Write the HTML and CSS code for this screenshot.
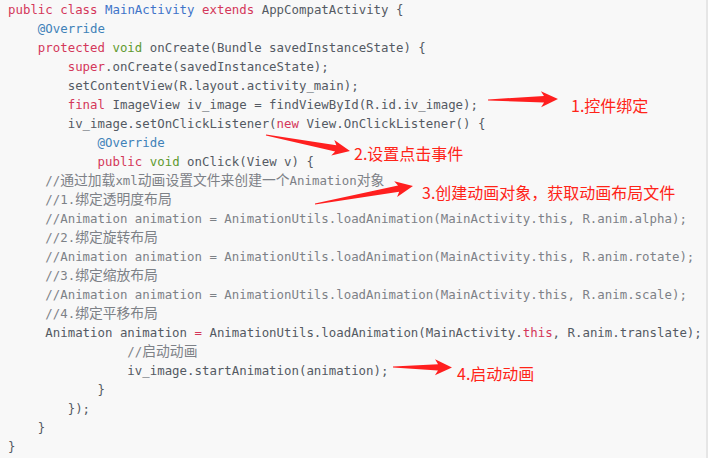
FILE: index.html
```html
<!DOCTYPE html>
<html lang="zh-CN">
<head>
<meta charset="utf-8">
<title>MainActivity</title>
<link rel="stylesheet" href="styles.css">
</head>
<body>
<div class="code-box">
<pre class="code"><div class="ln"><span class="k">public</span> <span class="k">class</span> <span class="t">MainActivity</span> <span class="k">extends</span> AppCompatActivity {</div><div class="ln">    <span class="a">@Override</span></div><div class="ln">    <span class="k">protected</span> <span class="g">void</span> onCreate(Bundle savedInstanceState) {</div><div class="ln">        <span class="k">super</span>.onCreate(savedInstanceState);</div><div class="ln">        setContentView(R.layout.activity_main);</div><div class="ln">        <span class="k">final</span> ImageView iv_image = findViewById(R.id.iv_image);</div><div class="ln">        iv_image.setOnClickListener(<span class="k">new</span> View.OnClickListener() {</div><div class="ln">            <span class="a">@Override</span></div><div class="ln">            <span class="k">public</span> <span class="g">void</span> onClick(View v) {</div><div class="ln c">     //<span class="cn">通过加载</span>xml<span class="cn">动画设置文件来创建一个</span>Animation<span class="cn">对象</span></div><div class="ln c">     //1.<span class="cn">绑定透明度布局</span></div><div class="ln c">     //Animation animation = AnimationUtils.loadAnimation(MainActivity.this, R.anim.alpha);</div><div class="ln c">     //2.<span class="cn">绑定旋转布局</span></div><div class="ln c">     //Animation animation = AnimationUtils.loadAnimation(MainActivity.this, R.anim.rotate);</div><div class="ln c">     //3.<span class="cn">绑定缩放布局</span></div><div class="ln c">     //Animation animation = AnimationUtils.loadAnimation(MainActivity.this, R.anim.scale);</div><div class="ln c">     //4.<span class="cn">绑定平移布局</span></div><div class="ln">     Animation animation <span class="k">=</span> AnimationUtils.loadAnimation(MainActivity.<span class="k">this</span>, R.anim.translate);</div><div class="ln c">                //<span class="cn">启动动画</span></div><div class="ln">                iv_image.startAnimation(animation);</div><div class="ln">            }</div><div class="ln">        });</div><div class="ln">    }</div><div class="ln">}</div></pre>
<svg class="arrows" width="706" height="458" viewBox="0 0 706 458">
  <g fill="#ff1f1f">
    <g transform="translate(488 100) rotate(-0.8)">
      <polygon points="0,-0.6 56,-3.2 53,-8 70,0 53,8 56,3.2 0,0.6"/>
    </g>
    <g transform="translate(266 135) rotate(10.8)">
      <polygon points="0,-0.6 71,-3.2 68,-8 85.5,0 68,8 71,3.2 0,0.6"/>
    </g>
    <g transform="translate(315 204) rotate(-10.4)">
      <polygon points="0,-0.6 85,-3.2 82,-8 99.6,0 82,8 85,3.2 0,0.6"/>
    </g>
    <g transform="translate(393 367) rotate(0.5)">
      <polygon points="0,-0.6 45,-3.2 42,-8 59,0 42,8 45,3.2 0,0.6"/>
    </g>
  </g>
</svg>
<span class="note n1">1.控件绑定</span>
<span class="note n2">2.设置点击事件</span>
<span class="note n3">3.创建动画对象，获取动画布局文件</span>
<span class="note n4">4.启动动画</span>
</div>
</body>
</html>
```

FILE: styles.css
```css
html, body {
  margin: 0;
  padding: 0;
  background: #ffffff;
}

.code-box {
  position: relative;
  width: 708px;
  height: 458px;
  box-sizing: border-box;
  background: #f8f8f8;
  border-right: 2px solid #e6e6e6;
  overflow: hidden;
}

.code {
  margin: 0;
  padding: 0 0 0 8px;
  font-family: "DejaVu Sans Mono", "Liberation Mono", monospace;
  font-size: 12.4px;
  color: #545a63;
  white-space: pre;
}

.ln {
  height: 19px;
  line-height: 19px;
}

.k { color: #d4375a; }
.g { color: #5f9a2f; }
.t { color: #3f74c9; }
.a { color: #3f82b8; }
.c { color: #7d8187; }

.cn {
  font-family: "Noto Sans CJK SC", sans-serif;
  font-size: 13.8px;
  line-height: 1;
}

.arrows {
  position: absolute;
  left: 0;
  top: 0;
}

.note {
  position: absolute;
  font-family: "Noto Sans CJK SC", sans-serif;
  font-size: 16px;
  line-height: 20px;
  color: #ff2418;
  white-space: nowrap;
}

.n1 { left: 571px; top: 95px; }
.n2 { left: 354px; top: 143px; }
.n3 { left: 422px; top: 182px; }
.n4 { left: 457px; top: 363px; }
```
